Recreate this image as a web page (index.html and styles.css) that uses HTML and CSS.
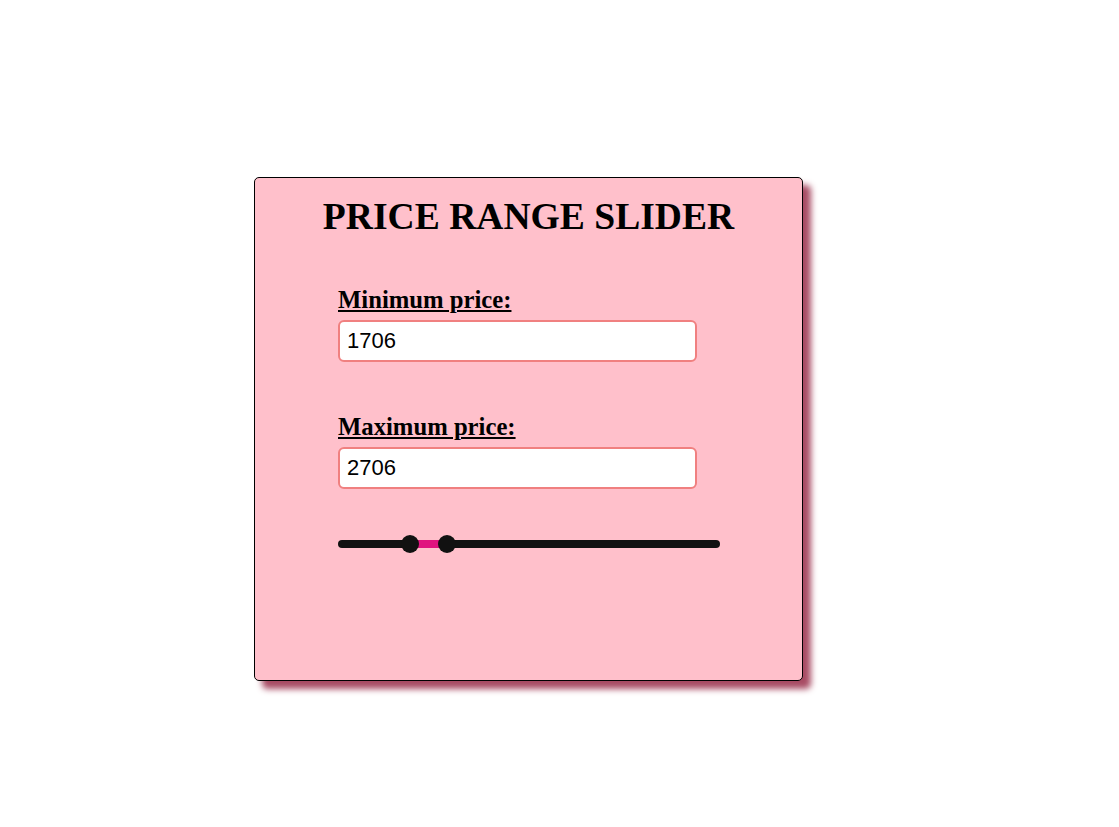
FILE: index.html
```html
<!DOCTYPE html>
<html lang="en">
<head>
  <meta charset="UTF-8" />
  <meta name="viewport" content="width=device-width, initial-scale=1.0"/>
  <title>Price Range Slider</title>
  <link rel="stylesheet" href="styles.css">
</head>
<body>

<!-- Card -->
<div class="card">
  <h1>PRICE RANGE SLIDER</h1>

  <div class="fields">
    <div class="field">
      <label for="minPrice">Minimum price:</label>
      <input type="text" id="minPrice" value="1706" />
    </div>

    <div class="field">
      <label for="maxPrice">Maximum price:</label>
      <input type="text" id="maxPrice" value="2706" />
    </div>

    <!-- Slider -->
    <div class="slider">
      <div class="track"></div>
      <div class="fill" style="--from: 0.1706; --to: 0.2706;"></div>
      <div class="thumb" style="--pos: 0.1706;"></div>
      <div class="thumb" style="--pos: 0.2706;"></div>
    </div>
  </div>
</div>

</body>
</html>
```

FILE: styles.css
```css
* { margin: 0; padding: 0; box-sizing: border-box; }

html, body {
  min-height: 100%;
}

body {
  font-family: "Liberation Serif", "Times New Roman", serif;
  background: #fff;
  padding: 177px 0 0 254px;
  min-height: 100vh;
}

.card {
  width: 549px;
  min-height: 504px;
  padding-top: 18px;
  background: pink;
  border: 1px solid #000;
  border-radius: 5px;
  box-shadow: 8px 8px 6px #a84c64;
}

.card h1 {
  font-size: 37.6px;
  line-height: 42px;
  text-align: center;
  margin-bottom: 48px;
}

.fields {
  padding-left: 83px;
}

.field {
  margin-bottom: 51px;
}

.field:nth-child(2) {
  margin-bottom: 46px;
}

.field label {
  display: block;
  font-size: 24.7px;
  font-weight: bold;
  line-height: 27px;
  text-decoration: underline;
  margin-bottom: 7px;
}

.field input {
  display: block;
  width: 359px;
  height: 42px;
  padding: 0 7px;
  font-family: "Liberation Sans", Arial, sans-serif;
  font-size: 22px;
  color: #000;
  background: #fff;
  border: 2px solid lightcoral;
  border-radius: 6px;
  outline: none;
}

.slider {
  position: relative;
  width: 382px;
  height: 18px;
  display: flex;
  align-items: center;
}

.track {
  width: 100%;
  height: 8px;
  background: #111;
  border-radius: 4px;
}

.fill {
  position: absolute;
  top: 5px;
  height: 8px;
  background: #e0147f;
  left: calc(9.5px + var(--from) * (100% - 16px));
  width: calc((var(--to) - var(--from)) * (100% - 16px));
}

.thumb {
  position: absolute;
  top: 0;
  width: 18px;
  height: 18px;
  margin-left: -9px;
  border-radius: 50%;
  background: #111;
  left: calc(9.5px + var(--pos) * (100% - 16px));
}
```
